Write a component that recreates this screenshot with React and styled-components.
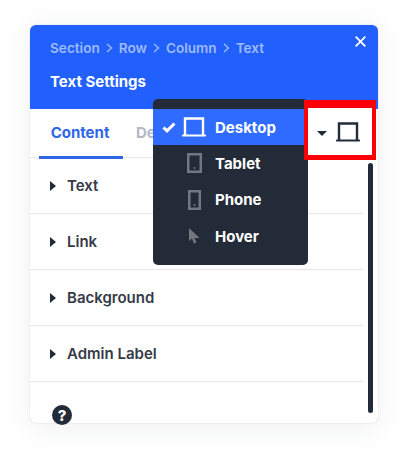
import React from "react";
import styled, { createGlobalStyle } from "styled-components";

const GlobalStyle = createGlobalStyle`
  html, body {
    margin: 0;
    background: #fff;
    font-family: Inter, "Liberation Sans", sans-serif;
  }
`;

const Page = styled.div`
  width: 407px;
  height: 449px;
  padding: 25px 0 0 30px;
  box-sizing: border-box;
  overflow: hidden;
`;

const Card = styled.div`
  position: relative;
  width: 348px;
  height: 398px;
  background: #fff;
  border-radius: 6px;
  box-shadow: 0 0 1px rgba(40, 50, 70, 0.35), 0 4px 30px rgba(40, 50, 70, 0.08);
`;

const Header = styled.div`
  height: 84px;
  box-sizing: border-box;
  padding: 15px 20px 0;
  background: #2160fd;
  border-radius: 6px 6px 0 0;
  position: relative;
`;

const Crumbs = styled.div`
  display: flex;
  align-items: center;
  gap: 6px;
  height: 16px;
  font-size: 13.6px;
  font-weight: 600;
  color: #9dbafd;
`;

const Title = styled.div`
  margin-top: 17px;
  font-size: 15px;
  line-height: 18px;
  font-weight: 700;
  color: #fff;
`;

const CloseButton = styled.div`
  position: absolute;
  top: 11px;
  right: 12px;
  width: 11px;
  height: 11px;
  display: flex;
`;

const Tabs = styled.div`
  display: flex;
  height: 49px;
  box-sizing: border-box;
  margin-right: 15px;
  border-bottom: 1px solid #e6e7ea;
`;

const Tab = styled.div`
  width: ${({ $width }) => $width}px;
  margin-left: ${({ $offset }) => $offset || 0}px;
  height: 50px;
  box-sizing: border-box;
  padding-top: 15px;
  padding-right: ${({ $active }) => ($active ? "2px" : "0")};
  text-align: ${({ $active }) => ($active ? "center" : "left")};
  font-size: 15px;
  line-height: 18px;
  font-weight: 700;
  color: ${({ $active }) => ($active ? "#2f66e8" : "#b4b8c6")};
  border-bottom: ${({ $active }) => ($active ? "3px solid #2f66e8" : "none")};
`;

const Row = styled.div`
  display: flex;
  align-items: center;
  gap: 11px;
  height: 56px;
  box-sizing: border-box;
  margin-right: 15px;
  padding-left: 20px;
  border-bottom: 1px solid #e6e7ea;
  font-size: 15px;
  font-weight: 600;
  color: #353a47;
`;

const Caret = styled.span`
  width: 0;
  height: 0;
  border-left: 6px solid #232a38;
  border-top: 5px solid transparent;
  border-bottom: 5px solid transparent;
`;

const Help = styled.div`
  position: absolute;
  left: 22px;
  top: 380px;
  width: 20px;
  height: 20px;
  border-radius: 50%;
  background: #232a38;
  color: #fff;
  display: flex;
  align-items: center;
  justify-content: center;
  font-size: 15px;
  font-weight: 800;
`;

const Scrollbar = styled.div`
  position: absolute;
  left: 338px;
  top: 138px;
  width: 5px;
  height: 250px;
  border-radius: 3px;
  background: #232a38;
`;

const Menu = styled.div`
  position: absolute;
  left: 123px;
  top: 74px;
  width: 155px;
  height: 166px;
  padding-top: 10px;
  box-sizing: border-box;
  border-radius: 5px;
  background: #232a38;
`;

const MenuItem = styled.div`
  display: flex;
  align-items: center;
  height: ${({ $active }) => ($active ? "36px" : "36.5px")};
  background: ${({ $active }) => ($active ? "#2f6bff" : "transparent")};
  font-size: 15px;
  font-weight: 700;
  color: #fff;
`;

const CheckSlot = styled.div`
  width: 29px;
  display: flex;
  justify-content: flex-end;
  padding-right: 6px;
  box-sizing: border-box;
`;

const IconSlot = styled.div`
  width: 24px;
  margin-right: 9px;
  display: flex;
  justify-content: center;
`;

const Highlight = styled.div`
  position: absolute;
  left: 274px;
  top: 75px;
  width: 72px;
  height: 60px;
  box-sizing: border-box;
  padding: 0 12px 0 9px;
  border: solid #fb0007;
  border-width: 8px 4px 5px;
  background: #fff;
  display: flex;
  align-items: center;
  justify-content: space-between;
`;

const SmallCaret = styled.span`
  width: 0;
  height: 0;
  margin-top: 4px;
  border-top: 5px solid #232a38;
  border-left: 5px solid transparent;
  border-right: 5px solid transparent;
`;

const Laptop = ({ color }) => (
  <svg width="24" height="20" viewBox="0 0 24 20" fill="none">
    <path d="M3 18V1.500h18V18" stroke={color} strokeWidth="2.400" />
    <path d="M1 18.500h22" stroke={color} strokeWidth="2.200" strokeLinecap="round" />
  </svg>
);

const Device = ({ width }) => (
  <svg width={width} height="20" viewBox={`0 0 ${width} 20`} fill="none">
    <rect x="1.250" y="1.250" width={width - 2.5} height="17.500" stroke="#73777f" strokeWidth="2.500" />
    <circle cx={width / 2} cy="15" r="1" fill="#73777f" />
  </svg>
);

const Cursor = () => (
  <svg width="11" height="16" viewBox="0 0 11 16">
    <path d="M0 0v13l3-2.500 2 5 2.500-1-2-4.500H10.500z" fill="#73777f" />
  </svg>
);

const Check = () => (
  <svg width="14" height="11" viewBox="0 0 14 11" fill="none">
    <path d="M1.500 5.500l3.500 3.300L12.500 1.500" stroke="#fff" strokeWidth="3" />
  </svg>
);

const crumbs = ["Section", "Row", "Column", "Text"];
const rows = ["Text", "Link", "Background", "Admin Label"];

const App = () => {
  return (
    <Page>
      <GlobalStyle />
      <Card>
        <Header>
          <Crumbs>
            {crumbs.map((crumb, index) => (
              <React.Fragment key={crumb}>
                {index > 0 && (
                  <svg width="7" height="10" viewBox="0 0 7 10" fill="none">
                    <path d="M1 1l4.500 4L1 9" stroke="#9dbafd" strokeWidth="1.400" />
                  </svg>
                )}
                <span>{crumb}</span>
              </React.Fragment>
            ))}
          </Crumbs>
          <Title>Text Settings</Title>
          <CloseButton>
            <svg width="11" height="11" viewBox="0 0 11 11" fill="none">
              <path d="M.7.7l9.600 9.600M10.300.7L.7 10.300" stroke="#fff" strokeWidth="1.800" />
            </svg>
          </CloseButton>
        </Header>
        <Tabs>
          <Tab $active $width={84} $offset={9}>Content</Tab>
          <Tab $width={60} $offset={13}>Design</Tab>
        </Tabs>
        {rows.map((row) => (
          <Row key={row}>
            <Caret />
            {row}
          </Row>
        ))}
        <Help>?</Help>
        <Scrollbar />
        <Menu>
          <MenuItem $active>
            <CheckSlot><Check /></CheckSlot>
            <IconSlot><Laptop color="#fff" /></IconSlot>
            Desktop
          </MenuItem>
          <MenuItem>
            <CheckSlot />
            <IconSlot><Device width={15} /></IconSlot>
            Tablet
          </MenuItem>
          <MenuItem>
            <CheckSlot />
            <IconSlot><Device width={13} /></IconSlot>
            Phone
          </MenuItem>
          <MenuItem>
            <CheckSlot />
            <IconSlot><Cursor /></IconSlot>
            Hover
          </MenuItem>
        </Menu>
        <Highlight>
          <SmallCaret />
          <Laptop color="#232a38" />
        </Highlight>
      </Card>
    </Page>
  );
};

export default App;
